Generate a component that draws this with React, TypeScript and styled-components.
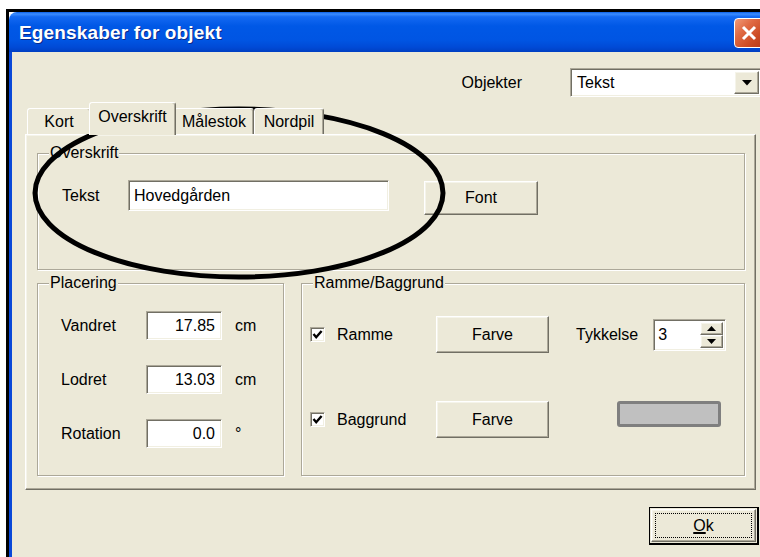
import React from "react";
import styled, { createGlobalStyle, css } from "styled-components";

const GlobalStyle = createGlobalStyle`
  html, body {
    margin: 0;
    padding: 0;
    background: #fff;
    overflow: hidden;
  }
  body {
    font-family: "Liberation Sans", Arial, sans-serif;
    font-size: 16px;
    color: #000;
  }
`;

const sunken = css`
  box-sizing: border-box;
  border: 1px solid;
  border-color: #aca899 #fff #fff #aca899;
  box-shadow: inset 1px 1px 0 #716f64, inset -1px -1px 0 #f1efe2;
  background: #fff;
`;

const raised = css`
  box-sizing: border-box;
  border: 1px solid;
  border-color: #fff #716f64 #716f64 #fff;
  box-shadow: inset -1px -1px 0 #aca899, inset 1px 1px 0 #f5f4ea;
  background: #ece9d8;
`;

const Stage = styled.div`
  position: relative;
  width: 760px;
  height: 557px;
  overflow: hidden;
  background: #fff;
`;

const Frame = styled.div`
  margin: 9px 0 0 6px;
  width: 800px;
  height: 600px;
  border-top: 3px solid #000;
  border-left: 3px solid #000;
  background: #fff;
`;

const Window = styled.div`
  width: 763px;
  display: flex;
  flex-direction: column;
`;

const TitleBar = styled.div`
  height: 40px;
  box-sizing: border-box;
  padding: 2px 8px 0 10px;
  display: flex;
  align-items: center;
  justify-content: space-between;
  border-radius: 8px 8px 0 0;
  background: linear-gradient(
    to bottom,
    #0a5fe8 0%,
    #3d8dff 5%,
    #1469f2 12%,
    #0058e6 35%,
    #0055e3 70%,
    #004ad6 88%,
    #003fc2 100%
  );
`;

const Title = styled.span`
  font-family: "Liberation Sans", Arial, sans-serif;
  font-weight: bold;
  font-size: 19px;
  letter-spacing: 0.15px;
  color: #fff;
  text-shadow: 1px 1px 0 #0a2a8a;
`;

const CloseButton = styled.div`
  width: 30px;
  height: 30px;
  box-sizing: border-box;
  border: 1px solid #fff;
  border-radius: 4px;
  background: linear-gradient(135deg, #f09a78 0%, #e06a43 35%, #cc4b24 70%, #b8391a 100%);
  display: flex;
  align-items: center;
  justify-content: center;
`;

const Body = styled.div`
  background: #ece9d8;
  border-left: 3px solid #0a48d8;
  border-right: 3px solid #0a48d8;
  padding: 16px 13px 40px 13px;
`;

const TopRow = styled.div`
  display: flex;
  justify-content: flex-end;
  align-items: center;
  gap: 48px;
  height: 29px;
  margin-right: -6px;
`;

const Combo = styled.div`
  ${sunken};
  width: 192px;
  height: 29px;
  display: flex;
  align-items: stretch;
  padding: 2px;
`;

const ComboValue = styled.div`
  flex: 1;
  padding-left: 4px;
  display: flex;
  align-items: center;
`;

const ArrowButton = styled.div<{ $w: number }>`
  ${raised};
  width: ${({ $w }) => $w}px;
  display: flex;
  align-items: center;
  justify-content: center;
`;

const TabStrip = styled.div`
  display: flex;
  align-items: flex-end;
  height: 32px;
  margin-top: 5px;
  padding-left: 2px;
  position: relative;
  z-index: 1;
`;

const Tab = styled.div<{ $w: number; $active?: boolean }>`
  box-sizing: border-box;
  width: ${({ $w }) => $w}px;
  height: 26px;
  border: 1px solid;
  border-bottom: none;
  border-color: #fff #716f64 transparent #fff;
  box-shadow: inset -1px 0 0 #aca899;
  border-radius: 3px 3px 0 0;
  background: #ece9d8;
  display: flex;
  align-items: center;
  justify-content: center;
  font-size: 16px;
  ${({ $active }) =>
    $active &&
    css`
      height: 33px;
      margin: 0 -2px -1px;
      padding-bottom: 4px;
      position: relative;
      z-index: 2;
    `}
`;

const Pane = styled.div`
  ${raised};
  padding: 9px 10px 13px 11px;
`;

const GroupBox = styled.fieldset`
  margin: 0;
  padding: 0;
  min-width: 0;
  border: 1px solid #aca899;
  box-shadow: 1px 1px 0 #fff, inset 1px 1px 0 #fff;
`;

const GroupTitle = styled.legend`
  margin-left: 11px;
  padding: 0 1px;
  line-height: 18px;
  font-size: 16px;
  background: #ece9d8;
`;

const TextRow = styled.div`
  display: flex;
  align-items: flex-start;
  padding: 18px 0 54px 24px;
`;

const FieldLabel = styled.span<{ $w: number; $h: number }>`
  width: ${({ $w }) => $w}px;
  line-height: ${({ $h }) => $h}px;
  flex-shrink: 0;
`;

const TextInput = styled.div<{ $w: number; $h: number; $right?: boolean }>`
  ${sunken};
  width: ${({ $w }) => $w}px;
  height: ${({ $h }) => $h}px;
  display: flex;
  align-items: center;
  justify-content: ${({ $right }) => ($right ? "flex-end" : "flex-start")};
  padding: 0 6px 0 5px;
`;

const PushButton = styled.div<{ $w: number; $h: number }>`
  ${raised};
  width: ${({ $w }) => $w}px;
  height: ${({ $h }) => $h}px;
  display: flex;
  align-items: center;
  justify-content: center;
`;

const FontButton = styled(PushButton)`
  margin: 1px 0 0 35px;
`;

const LowerRow = styled.div`
  display: grid;
  grid-template-columns: 247px 1fr;
  gap: 17px;
  margin-top: 4px;
`;

const PlacementGrid = styled.div`
  display: grid;
  grid-template-columns: 85px 76px auto;
  grid-auto-rows: 29px;
  row-gap: 25px;
  align-items: center;
  padding: 19px 0 27px 23px;
`;

const Unit = styled.span`
  margin-left: 13px;
  line-height: 29px;
`;

const FrameGrid = styled.div`
  display: grid;
  grid-template-columns: 126px 113px auto;
  grid-auto-rows: 37px;
  row-gap: 48px;
  align-items: center;
  padding: 24px 0 0 8px;
`;

const CheckCell = styled.label`
  display: flex;
  align-items: center;
  gap: 12px;
`;

const CheckBox = styled.div`
  ${sunken};
  width: 15px;
  height: 15px;
  display: flex;
  align-items: center;
  justify-content: center;
`;

const ThicknessCell = styled.div`
  display: flex;
  align-items: center;
  gap: 15px;
  margin-left: 27px;
`;

const Spinner = styled.div`
  ${sunken};
  width: 73px;
  height: 32px;
  display: flex;
  padding: 2px;
`;

const SpinValue = styled.div`
  flex: 1;
  padding-left: 2px;
  line-height: 26px;
`;

const SpinButtons = styled.div`
  width: 23px;
  display: flex;
  flex-direction: column;
`;

const SpinHalf = styled(ArrowButton)`
  flex: 1;
`;

const Swatch = styled.div`
  align-self: start;
  margin-left: 68px;
  width: 104px;
  height: 26px;
  box-sizing: border-box;
  border: 3px solid #7f7f7f;
  border-radius: 3px;
  background: #c0c0c0;
`;

const ButtonRow = styled.div`
  display: flex;
  justify-content: flex-end;
  margin: 17px -3px 0 0;
`;

const DefaultButton = styled.div`
  box-sizing: border-box;
  width: 110px;
  height: 38px;
  border: 1px solid #000;
  border-right-width: 2px;
  border-bottom-width: 2px;
  background: #ece9d8;
  padding: 1px;
  display: flex;
`;

const DefaultInner = styled.div`
  ${raised};
  flex: 1;
  padding: 3px;
  display: flex;
`;

const FocusRing = styled.div`
  flex: 1;
  border: 1px dotted #000;
  display: flex;
  align-items: center;
  justify-content: center;
`;

const Accel = styled.span`
  text-decoration: underline;
  text-decoration-thickness: 2px;
`;

const Annotation = styled.svg`
  position: absolute;
  top: 0;
  left: 0;
  pointer-events: none;
`;

const DownArrow = () => (
  <svg width="10" height="6" viewBox="0 0 10 6">
    <polygon points="0,0 10,0 5,5.5" fill="#000" />
  </svg>
);

const SmallArrow = ({ up }: { up?: boolean }) => (
  <svg width="9" height="5" viewBox="0 0 9 5">
    <polygon points={up ? "0,5 9,5 4.5,0" : "0,0 9,0 4.5,5"} fill="#000" />
  </svg>
);

const Check = () => (
  <svg width="11" height="11" viewBox="0 0 11 11">
    <polyline points="1.5,5 4.2,8.2 9.6,2" fill="none" stroke="#000" strokeWidth="2.4" />
  </svg>
);

const placement = [
  { label: "Vandret", value: "17.85", unit: "cm" },
  { label: "Lodret", value: "13.03", unit: "cm" },
  { label: "Rotation", value: "0.0", unit: "°" },
];

const tabs = [
  { name: "Kort", w: 64 },
  { name: "Overskrift", w: 87, active: true },
  { name: "Målestok", w: 80 },
  { name: "Nordpil", w: 70 },
];

export default function App() {
  return (
    <Stage>
      <GlobalStyle />
      <Frame>
        <Window>
          <TitleBar>
            <Title>Egenskaber for objekt</Title>
            <CloseButton>
              <svg width="16" height="16" viewBox="0 0 16 16">
                <path d="M2 2 L14 14 M14 2 L2 14" stroke="#fff" strokeWidth="3" />
              </svg>
            </CloseButton>
          </TitleBar>
          <Body>
            <TopRow>
              <span>Objekter</span>
              <Combo>
                <ComboValue>Tekst</ComboValue>
                <ArrowButton $w={25}>
                  <DownArrow />
                </ArrowButton>
              </Combo>
            </TopRow>

            <TabStrip>
              {tabs.map((t) => (
                <Tab key={t.name} $w={t.w} $active={t.active}>
                  {t.name}
                </Tab>
              ))}
            </TabStrip>

            <Pane>
              <GroupBox>
                <GroupTitle>Overskrift</GroupTitle>
                <TextRow>
                  <FieldLabel $w={66} $h={31}>Tekst</FieldLabel>
                  <TextInput $w={261} $h={31}>Hovedgården</TextInput>
                  <FontButton $w={114} $h={34}>Font</FontButton>
                </TextRow>
              </GroupBox>

              <LowerRow>
                <GroupBox>
                  <GroupTitle>Placering</GroupTitle>
                  <PlacementGrid>
                    {placement.map((p) => (
                      <React.Fragment key={p.label}>
                        <FieldLabel $w={85} $h={29}>{p.label}</FieldLabel>
                        <TextInput $w={76} $h={29} $right>
                          {p.value}
                        </TextInput>
                        <Unit>{p.unit}</Unit>
                      </React.Fragment>
                    ))}
                  </PlacementGrid>
                </GroupBox>

                <GroupBox>
                  <GroupTitle>Ramme/Baggrund</GroupTitle>
                  <FrameGrid>
                    <CheckCell>
                      <CheckBox>
                        <Check />
                      </CheckBox>
                      Ramme
                    </CheckCell>
                    <PushButton $w={113} $h={37}>Farve</PushButton>
                    <ThicknessCell>
                      <span>Tykkelse</span>
                      <Spinner>
                        <SpinValue>3</SpinValue>
                        <SpinButtons>
                          <SpinHalf $w={23}>
                            <SmallArrow up />
                          </SpinHalf>
                          <SpinHalf $w={23}>
                            <SmallArrow />
                          </SpinHalf>
                        </SpinButtons>
                      </Spinner>
                    </ThicknessCell>

                    <CheckCell>
                      <CheckBox>
                        <Check />
                      </CheckBox>
                      Baggrund
                    </CheckCell>
                    <PushButton $w={113} $h={37}>Farve</PushButton>
                    <Swatch />
                  </FrameGrid>
                </GroupBox>
              </LowerRow>
            </Pane>

            <ButtonRow>
              <DefaultButton>
                <DefaultInner>
                  <FocusRing>
                    <Accel>O</Accel>k
                  </FocusRing>
                </DefaultInner>
              </DefaultButton>
            </ButtonRow>
          </Body>
        </Window>
      </Frame>

      <Annotation width="760" height="557" viewBox="0 0 760 557">
        <ellipse cx="239" cy="193" rx="204" ry="84" fill="none" stroke="#000" strokeWidth="5" />
      </Annotation>
    </Stage>
  );
}
